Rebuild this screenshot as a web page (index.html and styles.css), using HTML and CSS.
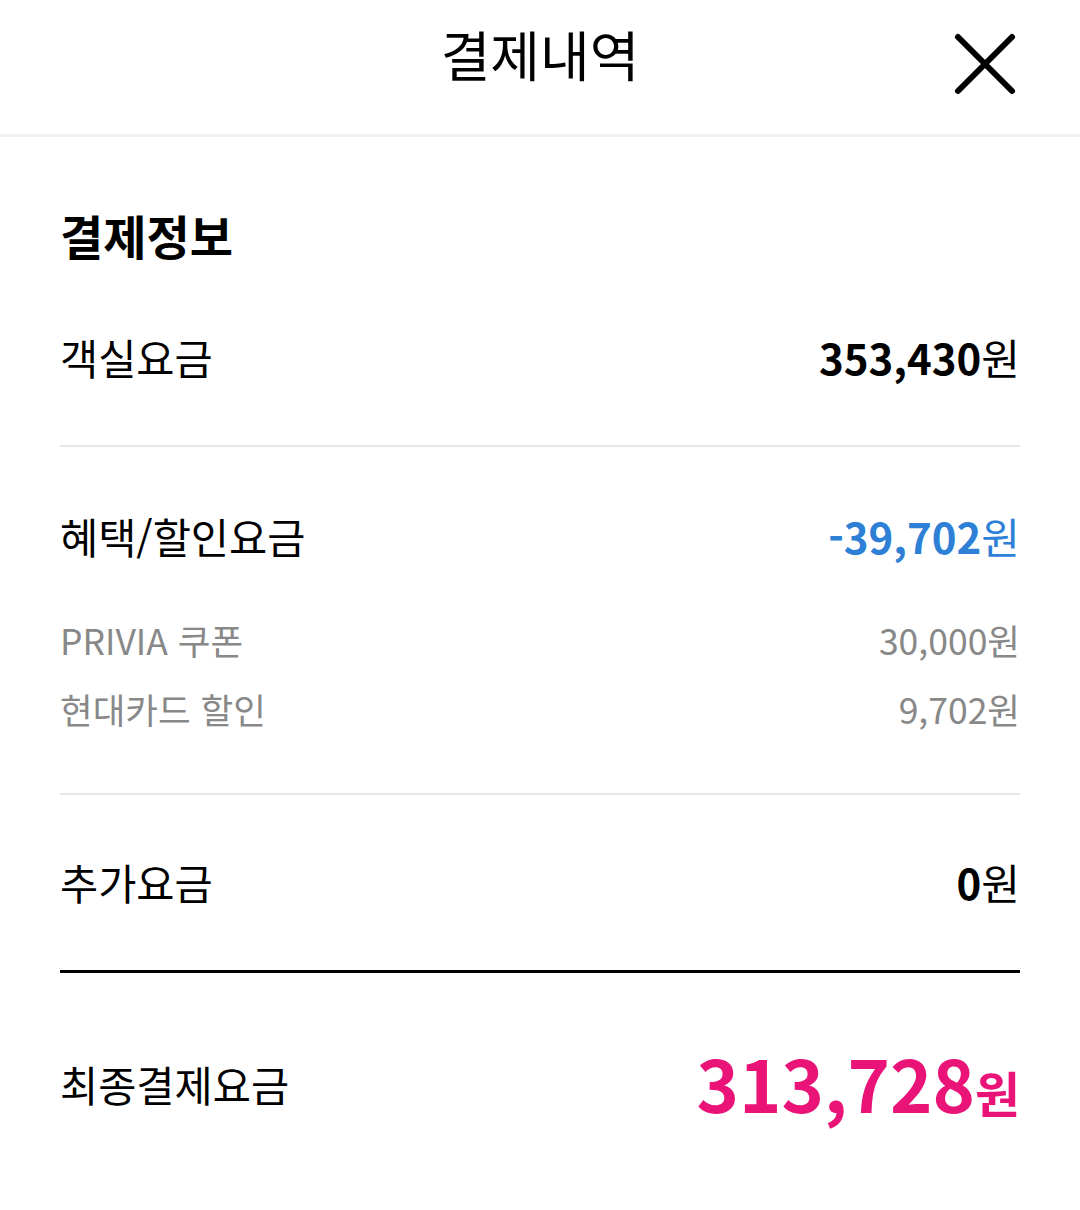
FILE: index.html
```html
<!DOCTYPE html>
<html lang="ko">
<head>
    <meta charset="UTF-8">
    <meta name="viewport" content="width=device-width, initial-scale=1.0">
    <title>결제내역</title>
    <link rel="stylesheet" href="styles.css">
</head>
<body>
    <div class="header">
        <h1 class="title">결제내역</h1>
        <span class="close">
            <svg width="64" height="64" viewBox="0 0 64 64">
                <path d="M5 5 L59 59 M59 5 L5 59" stroke="#000" stroke-width="6" stroke-linecap="round" fill="none"/>
            </svg>
        </span>
    </div>

    <div class="content">
        <h2 class="sec-title">결제정보</h2>

        <div class="group">
            <div class="row">
                <span class="label">객실요금</span>
                <span class="amount"><b>353,430</b>원</span>
            </div>
        </div>

        <div class="group discount">
            <div class="row">
                <span class="label">혜택/할인요금</span>
                <span class="amount blue"><b>-39,702</b>원</span>
            </div>
            <div class="subrows">
                <div class="row sub">
                    <span>PRIVIA 쿠폰</span>
                    <span>30,000원</span>
                </div>
                <div class="row sub">
                    <span>현대카드 할인</span>
                    <span>9,702원</span>
                </div>
            </div>
        </div>

        <div class="group last">
            <div class="row">
                <span class="label">추가요금</span>
                <span class="amount"><b>0</b>원</span>
            </div>
        </div>

        <div class="row total">
            <span class="label">최종결제요금</span>
            <span class="total-amount">313,728<small>원</small></span>
        </div>
    </div>
</body>
</html>
```

FILE: styles.css
```css
*{
    margin: 0;
    padding: 0;
    box-sizing: border-box;
}
body{
    font-family: "Noto Sans CJK KR", "Noto Sans", sans-serif;
    background-color: #fff;
    color: #000;
    width: 1080px;
    min-height: 1210px;
}
.header{
    position: relative;
    height: 137px;
    border-bottom: 3px solid #f1f1f1;
    display: flex;
    justify-content: center;
}
.title{
    font-size: 54px;
    font-weight: 400;
    line-height: 60px;
    padding-top: 24px;
}
.close{
    position: absolute;
    right: 63px;
    top: 32px;
    width: 64px;
    height: 64px;
}
.close svg{
    display: block;
}
.content{
    padding: 0 60px;
}
.sec-title{
    font-size: 47px;
    font-weight: 700;
    line-height: 56px;
    padding-top: 70px;
}
.group{
    border-bottom: 2px solid #e6e6e6;
    padding: 66px 0 60px;
}
.group.discount{
    padding: 61px 0 50px;
}
.group.last{
    border-bottom: 3px solid #000;
    padding: 59px 0 60px;
}
.row{
    display: flex;
    justify-content: space-between;
    align-items: center;
    line-height: 56px;
}
.label{
    font-size: 41.5px;
}
.amount{
    font-size: 42px;
}
.amount b{
    font-weight: 700;
}
.blue{
    color: #2e7fd6;
}
.subrows{
    margin-top: 41px;
}
.row.sub{
    line-height: 69px;
    font-size: 35.5px;
    color: #888;
}
.row.total{
    padding-top: 69px;
    line-height: 80px;
}
.row.total .label{
    margin-bottom: 6px;
}
.total-amount{
    color: #ea1479;
    font-size: 72px;
    font-weight: 700;
}
.total-amount small{
    font-size: 49px;
    font-weight: 700;
}
```
